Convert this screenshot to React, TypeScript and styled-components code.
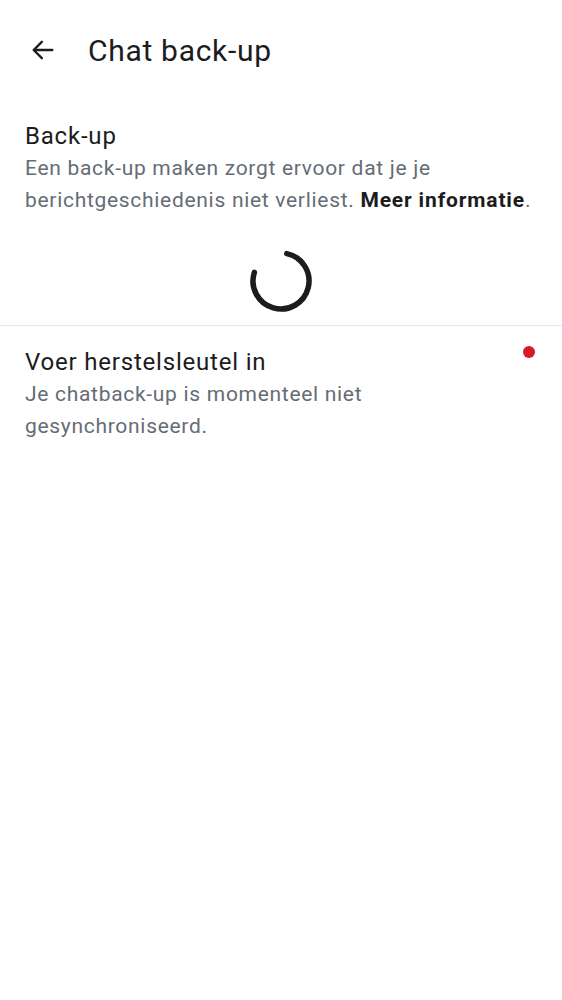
import React from 'react';
import styled, { createGlobalStyle } from 'styled-components';

const GlobalStyle = createGlobalStyle`
  html, body {
    margin: 0;
    padding: 0;
    background: #ffffff;
  }
  body {
    font-family: Roboto, 'Noto Sans', sans-serif;
    color: #1b1c20;
  }
`;

function BackArrow() {
  return (
    <svg width='28' height='28' viewBox='0 0 24 24' fill='none'>
      <path
        d='M20 12H4.5M11 5l-7 7 7 7'
        stroke='#1b1c20'
        strokeWidth='2'
        strokeLinecap='round'
        strokeLinejoin='round'
      />
    </svg>
  );
}

function Spinner() {
  // arc from ~-80deg round clockwise to ~200deg
  const r = 28;
  const cx = 34;
  const cy = 34;
  const a0 = (-78 * Math.PI) / 180;
  const a1 = (198 * Math.PI) / 180;
  const x0 = cx + r * Math.cos(a0);
  const y0 = cy + r * Math.sin(a0);
  const x1 = cx + r * Math.cos(a1);
  const y1 = cy + r * Math.sin(a1);
  return (
    <svg width='68' height='68' viewBox='0 0 68 68' fill='none'>
      <path
        d={`M${x0} ${y0} A${r} ${r} 0 1 1 ${x1} ${y1}`}
        stroke='#1b1c20'
        strokeWidth='5.5'
        strokeLinecap='round'
      />
    </svg>
  );
}

function App() {
  return (
    <Page>
      <GlobalStyle />
      <Toolbar>
        <IconButton aria-label='Terug'>
          <BackArrow />
        </IconButton>
        <Title>Chat back-up</Title>
      </Toolbar>

      <Section>
        <ItemTitle>Back-up</ItemTitle>
        <ItemText>
          Een back-up maken zorgt ervoor dat je je berichtgeschiedenis niet
          verliest. <strong>Meer informatie</strong>.
        </ItemText>
      </Section>

      <SpinnerRow>
        <Spinner />
      </SpinnerRow>

      <Divider />

      <Section $withDot>
        <ItemTitle>Voer herstelsleutel in</ItemTitle>
        <ItemText>Je chatback-up is momenteel niet gesynchroniseerd.</ItemText>
        <Dot />
      </Section>
    </Page>
  );
}

const Page = styled.div`
  width: 562px;
  min-height: 1000px;
  background: #ffffff;
`;

const Toolbar = styled.div`
  display: flex;
  align-items: center;
  height: 100px;
  padding: 0 0 0 29px;
  box-sizing: border-box;
`;

const IconButton = styled.button`
  display: flex;
  align-items: center;
  justify-content: center;
  width: 28px;
  height: 28px;
  padding: 0;
  border: none;
  background: none;
  margin-right: 31px;
`;

const Title = styled.h1`
  margin: 0;
  font-size: 30px;
  font-weight: 400;
  letter-spacing: 0.7px;
  color: #1b1c20;
`;

const Section = styled.div<{ $withDot?: boolean }>`
  position: relative;
  padding: ${(p) => (p.$withDot ? '20px 60px 0 25px' : '20px 15px 0 25px')};
`;

const ItemTitle = styled.div`
  font-size: 24px;
  line-height: 32px;
  letter-spacing: 0.8px;
  color: #1b1c20;
`;

const ItemText = styled.div`
  font-size: 21px;
  line-height: 32px;
  letter-spacing: 0.7px;
  color: #656c76;
  strong {
    color: #1b1c20;
    font-weight: 700;
    letter-spacing: 0.85px;
  }
`;

const SpinnerRow = styled.div`
  display: flex;
  justify-content: center;
  padding: 31px 0 10px 0;
`;

const Divider = styled.div`
  height: 1px;
  background: #e9e9ed;
`;

const Dot = styled.span`
  position: absolute;
  top: 20px;
  right: 27px;
  width: 12px;
  height: 12px;
  border-radius: 50%;
  background: #d61a2b;
`;

export default App;
